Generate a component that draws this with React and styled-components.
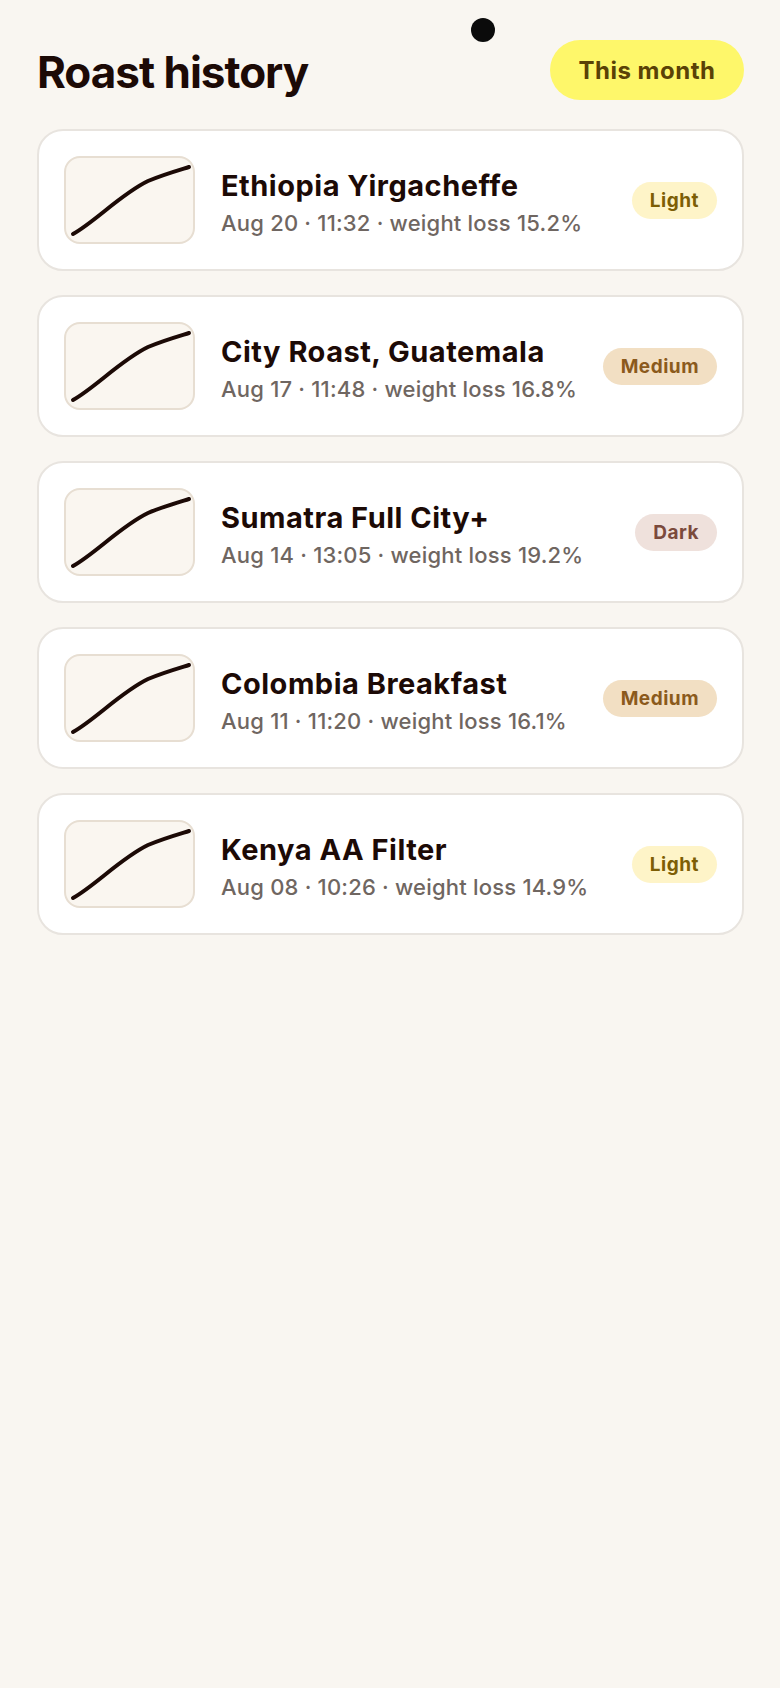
import React from "react";
import styled, { createGlobalStyle } from "styled-components";

const GlobalStyle = createGlobalStyle`
    html, body {
        margin: 0;
        padding: 0;
        background: #f9f6f1;
        font-family: "Inter", "Liberation Sans", sans-serif;
    }
`;

const Page = styled.div`
    position: relative;
    min-height: 1688px;
    box-sizing: border-box;
    padding: 40px 36px 40px 37px;
    background: #f9f6f1;
`;

const CameraDot = styled.div`
    position: absolute;
    top: 18px;
    left: 471px;
    width: 24px;
    height: 24px;
    border-radius: 50%;
    background: #0b0b0b;
`;

const Header = styled.header`
    display: flex;
    align-items: center;
    justify-content: space-between;
    height: 60px;
    margin-bottom: 29px;
`;

const Heading = styled.h1`
    margin: 0;
    font-size: 44px;
    font-weight: 700;
    letter-spacing: -1px;
    color: #1c0a06;
    line-height: 1;
    padding-top: 4px;
`;

const FilterButton = styled.button`
    height: 60px;
    width: 194px;
    border: none;
    border-radius: 30px;
    background: #fef76a;
    color: #5a4206;
    font-family: inherit;
    font-size: 24px;
    font-weight: 700;
    letter-spacing: 0.5px;
    cursor: pointer;
`;

const List = styled.div`
    display: flex;
    flex-direction: column;
    gap: 24px;
`;

const Card = styled.div`
    display: flex;
    align-items: center;
    gap: 26px;
    padding: 25px;
    border: 2px solid #e8e4df;
    border-radius: 26px;
    background: #ffffff;
`;

const Thumb = styled.div`
    flex: 0 0 auto;
    width: 131px;
    height: 88px;
    box-sizing: border-box;
    border: 2px solid #e7ded2;
    border-radius: 16px;
    background: #faf6f0;
    display: flex;
    svg {
        display: block;
    }
`;

const Info = styled.div`
    flex: 1;
    display: flex;
    flex-direction: column;
    gap: 5px;
    padding-top: 4px;
    min-width: 0;
`;

const Title = styled.div`
    font-size: 29px;
    font-weight: 700;
    letter-spacing: 0.5px;
    line-height: 36px;
    color: #1c0a06;
    white-space: nowrap;
`;

const Meta = styled.div`
    font-size: 22px;
    font-weight: 500;
    letter-spacing: 0.2px;
    line-height: 28px;
    color: #6f6661;
    white-space: nowrap;
`;

const badgeColors = {
    Light: { bg: "#fef4c8", fg: "#7d5e05" },
    Medium: { bg: "#f2dfc3", fg: "#8b5a1c" },
    Dark: { bg: "#efe1dc", fg: "#7b4a3c" },
};

const Badge = styled.span`
    flex: 0 0 auto;
    padding: 8px 18px;
    border-radius: 20px;
    font-size: 19px;
    font-weight: 700;
    letter-spacing: 0.5px;
    line-height: 21px;
    background: ${({ level }) => badgeColors[level].bg};
    color: ${({ level }) => badgeColors[level].fg};
`;

const roasts = [
    { name: "Ethiopia Yirgacheffe", date: "Aug 20", time: "11:32", loss: "15.2%", level: "Light" },
    { name: "City Roast, Guatemala", date: "Aug 17", time: "11:48", loss: "16.8%", level: "Medium" },
    { name: "Sumatra Full City+", date: "Aug 14", time: "13:05", loss: "19.2%", level: "Dark" },
    { name: "Colombia Breakfast", date: "Aug 11", time: "11:20", loss: "16.1%", level: "Medium" },
    { name: "Kenya AA Filter", date: "Aug 08", time: "10:26", loss: "14.9%", level: "Light" },
];

function Curve() {
    return (
        <svg width="127" height="84" viewBox="0 0 127 84">
            <path
                d="M7 76 C 30 63, 55 36, 82 23 C 96 17, 110 13, 123 9"
                fill="none"
                stroke="#1c0a06"
                strokeWidth="4"
                strokeLinecap="round"
            />
        </svg>
    );
}

export default function App() {
    return (
        <>
            <GlobalStyle />
            <Page>
                <CameraDot />
                <Header>
                    <Heading>Roast history</Heading>
                    <FilterButton>This month</FilterButton>
                </Header>
                <List>
                    {roasts.map((r) => (
                        <Card key={r.name}>
                            <Thumb>
                                <Curve />
                            </Thumb>
                            <Info>
                                <Title>{r.name}</Title>
                                <Meta>
                                    {r.date} · {r.time} · weight loss {r.loss}
                                </Meta>
                            </Info>
                            <Badge level={r.level}>{r.level}</Badge>
                        </Card>
                    ))}
                </List>
            </Page>
        </>
    );
}
